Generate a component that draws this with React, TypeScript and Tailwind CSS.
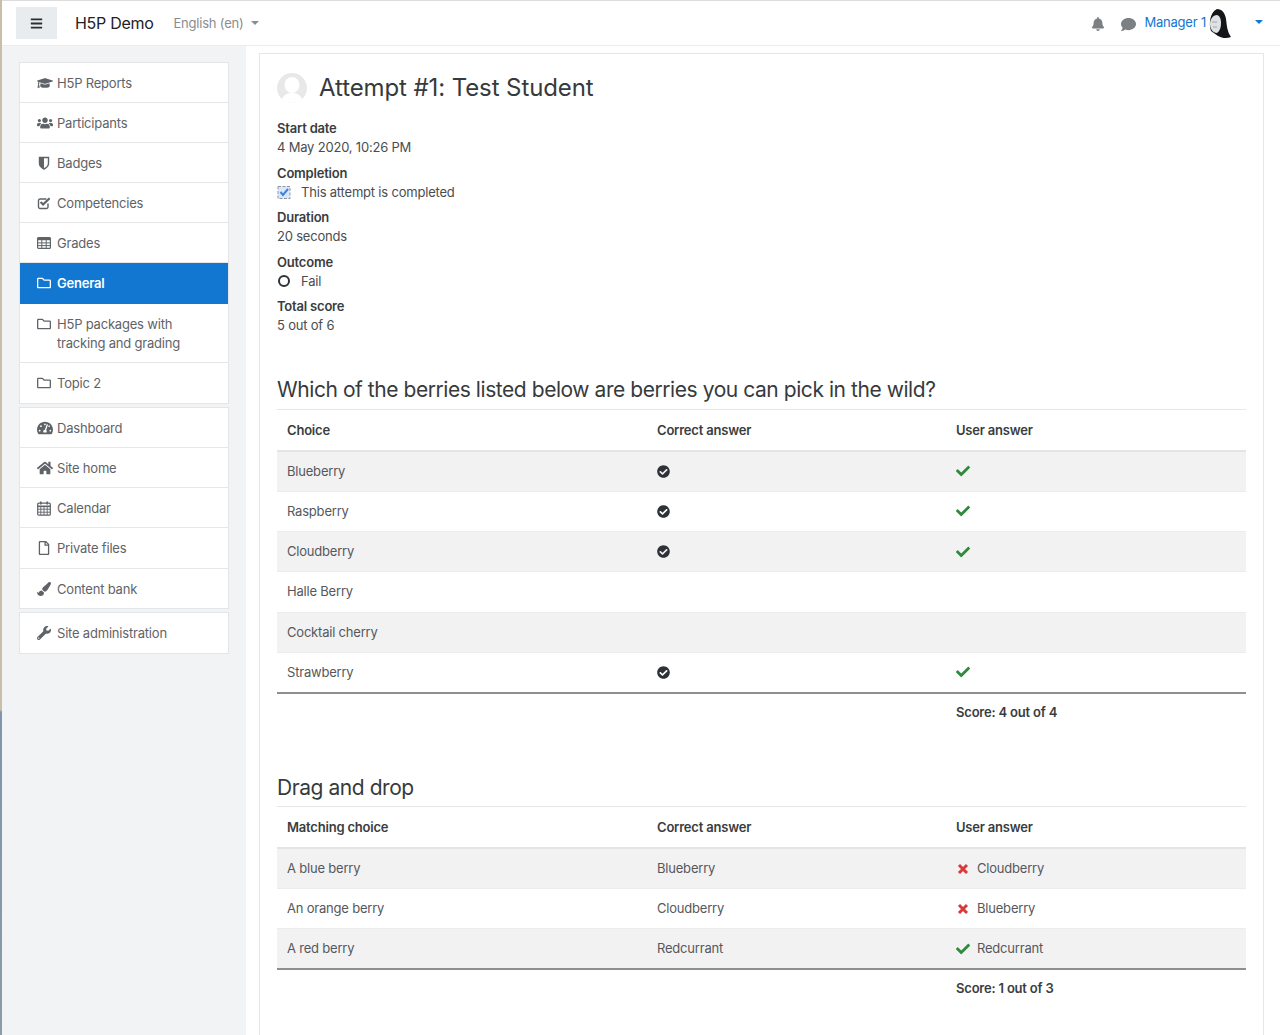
import type { ReactNode } from "react";
import {
  FaBars,
  FaBell,
  FaCheck,
  FaCheckCircle,
  FaComment,
  FaGraduationCap,
  FaHome,
  FaPaintBrush,
  FaRegFile,
  FaRegFolder,
  FaTachometerAlt,
  FaUsers,
  FaWrench,
} from "react-icons/fa";

type NavItem = { icon: ReactNode; label: ReactNode; rowClass?: string; active?: boolean };

const ic = "w-[14px] h-[14px] shrink-0";
const icWide = "w-[16px] h-[16px] shrink-0";

function ShieldIcon() {
  return (
    <svg viewBox="0 0 14 14" className="w-[14px] h-[14px] shrink-0">
      <path d="M2.5 1.5h9v6c0 3-2.500 4.500-4.500 5.500-2-1-4.500-2.500-4.500-5.500z" fill="none" stroke="currentColor" strokeWidth="1.400" />
      <path d="M2.500 1.500H7V13c-2-1-4.500-2.500-4.500-5.500z" fill="currentColor" />
    </svg>
  );
}

function CheckSquareIcon() {
  return (
    <svg viewBox="0 0 14 14" className="w-[14px] h-[14px] shrink-0">
      <path d="M11 7.500V11a1.500 1.500 0 0 1-1.500 1.500H3A1.500 1.500 0 0 1 1.500 11V4.500A1.500 1.500 0 0 1 3 3h6.500" fill="none" stroke="currentColor" strokeWidth="1.400" />
      <path d="M3.600 6l2.500 2.500 6.500-6.200" fill="none" stroke="currentColor" strokeWidth="2.200" />
    </svg>
  );
}

function GridIcon() {
  return (
    <svg viewBox="0 0 14 14" className="w-[14px] h-[14px] shrink-0">
      <rect x="0.600" y="1.600" width="12.800" height="10.800" rx="1" fill="none" stroke="currentColor" strokeWidth="1.200" />
      <rect x="0.600" y="1.600" width="12.800" height="2.600" fill="currentColor" />
      <path d="M0.600 6.900h12.800M0.600 9.600h12.800M4.800 4v8M9.200 4v8" stroke="currentColor" strokeWidth="1" />
    </svg>
  );
}

function CalendarIcon() {
  return (
    <svg viewBox="0 0 14 15" className="w-[14px] h-[15px] shrink-0">
      <rect x="0.700" y="2.200" width="12.600" height="12" rx="1" fill="none" stroke="currentColor" strokeWidth="1.200" />
      <path d="M0.700 5.300h12.600" stroke="currentColor" strokeWidth="1.600" />
      <path d="M0.700 8.200h12.600M0.700 11.200h12.600M3.800 5v9M7 5v9M10.200 5v9" stroke="currentColor" strokeWidth="0.900" />
      <path d="M3.800 0.500v3M10.200 0.500v3" stroke="currentColor" strokeWidth="1.600" />
    </svg>
  );
}

const nav1: NavItem[] = [
  { icon: <FaGraduationCap className={icWide} />, label: "H5P Reports" },
  { icon: <FaUsers className={icWide} />, label: "Participants" },
  { icon: <ShieldIcon />, label: "Badges" },
  { icon: <CheckSquareIcon />, label: "Competencies" },
  { icon: <GridIcon />, label: "Grades" },
  { icon: <FaRegFolder className={ic} />, label: "General", active: true, rowClass: "h-[41px] pt-[11px]" },
  {
    icon: <FaRegFolder className={ic} />,
    label: (
      <>
        H5P packages with
        <br />
        tracking and grading
      </>
    ),
    rowClass: "h-[59px] pt-[11px]",
  },
  { icon: <FaRegFolder className={ic} />, label: "Topic 2" },
];

const nav2: NavItem[] = [
  { icon: <FaTachometerAlt className={icWide} />, label: "Dashboard" },
  { icon: <FaHome className={icWide} />, label: "Site home" },
  { icon: <CalendarIcon />, label: "Calendar" },
  { icon: <FaRegFile className={ic} />, label: "Private files", rowClass: "h-[41px] pt-[11px]" },
  { icon: <FaPaintBrush className={ic} />, label: "Content bank", rowClass: "h-[39px] pt-[11px]" },
];

const nav3: NavItem[] = [{ icon: <FaWrench className={ic} />, label: "Site administration" }];

function NavGroup({ items }: { items: NavItem[] }) {
  return (
    <ul className="bg-white border border-[#e3e5e7]">
      {items.map((item, i) => (
        <li
          key={i}
          className={`flex items-start gap-[5px] pl-[17px] pr-2 ${item.rowClass ?? "h-[40px] pt-[11px]"} ${
            item.active ? "bg-[#1177d1] text-white font-semibold" : "text-[#5f6368]"
          } ${i < items.length - 1 && !item.active ? "border-b border-[#e5e7e9]" : ""}`}
        >
          <span className="w-[15px] h-[18px] flex items-center justify-start shrink-0">{item.icon}</span>
          <span className="leading-[19px]">{item.label}</span>
        </li>
      ))}
    </ul>
  );
}

function Field({ label, children }: { label: string; children: ReactNode }) {
  return (
    <div className="h-[44.5px]">
      <div className="font-semibold leading-[19px] text-[#3a3d40]">{label}</div>
      <div className="leading-[19px] flex items-center text-[#4a4d50]">{children}</div>
    </div>
  );
}

function Good() {
  return <FaCheck className="w-[14px] h-[14px] text-[#2f8a3c]" />;
}

function Bad() {
  return (
    <svg viewBox="0 0 14 14" className="w-[14px] h-[14px] text-[#d83a3a]">
      <path d="M3 3l8 8M11 3l-8 8" fill="none" stroke="currentColor" strokeWidth="3" />
    </svg>
  );
}

function Correct() {
  return <FaCheckCircle className="w-[13px] h-[13px] text-[#2e3236]" />;
}

type Row = { a: string; b: ReactNode; c: ReactNode };

function AnswerTable({ head, rows, score }: { head: string[]; rows: Row[]; score: string }) {
  return (
    <table className="w-full table-fixed border-collapse">
      <colgroup>
        <col className="w-[370px]" />
        <col className="w-[299px]" />
        <col />
      </colgroup>
      <thead>
        <tr className="h-[42px] border-t border-[#e6e7e8] border-b-2 border-b-[#e3e4e6] text-left text-[#3a3d40]">
          {head.map((h) => (
            <th key={h} className="px-[10px] pt-[2px] font-semibold">
              {h}
            </th>
          ))}
        </tr>
      </thead>
      <tbody className="text-[#55585c] border-b-2 border-b-[#8d8f91]">
        {rows.map((r, i) => (
          <tr key={r.a} className={`h-[40.3px] border-b border-[#ebecec] ${i % 2 === 0 ? "bg-[#f2f2f3]" : ""}`}>
            <td className="px-[10px]">{r.a}</td>
            <td className="px-[10px]">{r.b}</td>
            <td className="px-[10px]">{r.c}</td>
          </tr>
        ))}
      </tbody>
      <tfoot>
        <tr className="h-[39px]">
          <td />
          <td />
          <td className="px-[10px] font-semibold text-[#3a3d40]">{score}</td>
        </tr>
      </tfoot>
    </table>
  );
}

function UserAnswer({ good, text }: { good: boolean; text: string }) {
  return (
    <span className="flex items-center gap-[7px]">
      <span className="w-[14px] flex justify-center">{good ? <Good /> : <Bad />}</span>
      {text}
    </span>
  );
}

export default function App() {
  return (
    <div className="relative w-[1280px] h-[1035px] overflow-hidden bg-white text-[13px] tracking-[-0.2px] font-['Inter','Noto_Sans',sans-serif] flex flex-col">
      {/* Top bar */}
      <header className="h-[46px] shrink-0 flex items-center pl-[16px] pr-[17px] border-t border-t-[#dcdcdc] border-b border-b-[#ececec] bg-white">
        <button className="w-[41px] h-[32px] bg-[#e9ecef] flex items-center justify-center text-[#2b2f33]">
          <FaBars className="w-[13px] h-[13px]" />
        </button>
        <span className="ml-[18px] text-[16px] tracking-[-0.3px] text-[#1d2125]">H5P Demo</span>
        <span className="ml-[20px] mt-[2px] text-[#8a8d90]">English (en)</span>
        <span className="ml-[7px] w-0 h-0 border-x-[4px] border-x-transparent border-t-[4px] border-t-[#8a8d90]" />
        <div className="ml-auto flex items-center">
          <FaBell className="w-[14px] h-[14px] mt-[2px] text-[#7d8083]" />
          <FaComment className="ml-[16px] w-[15px] h-[15px] mt-[2px] text-[#7d8083]" />
          <span className="ml-[8px] text-[#1177d1]">Manager 1</span>
          <svg viewBox="0 0 24 30" className="ml-[2px] w-[24px] h-[30px] mt-[1px]">
            <path d="M9 0c5 0 8 4 9 10 1 7 1 12 5 18-5 2-9 1-13-1L3 22C1 16 1 4 9 0z" fill="#15161a" />
            <path d="M9 6C5 6 2 10 2 15c0 5 3 9 7 9 3-2 4-6 4-10 0-4-1-7-4-8z" fill="#dfe2e4" />
            <path d="M4 13h5M5 18h4" stroke="#a5a8aa" strokeWidth="1" />
          </svg>
          <span className="ml-[23px] mb-[3px] w-0 h-0 border-x-[4px] border-x-transparent border-t-[4px] border-t-[#1177d1]" />
        </div>
      </header>

      <div className="flex flex-1 min-h-0">
        {/* Sidebar */}
        <aside className="w-[246px] shrink-0 bg-[#f2f3f4] pl-[19px] pr-[17px] pt-[16px] flex flex-col gap-[3px]">
          <NavGroup items={nav1} />
          <NavGroup items={nav2} />
          <NavGroup items={nav3} />
        </aside>

        {/* Main */}
        <main className="flex-1 pl-[13px] pr-[16px] pt-[7px] min-w-0">
          <section className="h-[1100px] border border-[#e6e7e8] pl-[17px] pr-[17px] pt-[19px]">
            <div className="flex items-center h-[30px] gap-[12px]">
              <svg viewBox="0 0 30 30" className="w-[30px] h-[30px]">
                <defs>
                  <clipPath id="avatar">
                    <circle cx="15" cy="15" r="15" />
                  </clipPath>
                </defs>
                <g clipPath="url(#avatar)">
                  <rect width="30" height="30" fill="#e8e8e8" />
                  <ellipse cx="15" cy="12" rx="7.500" ry="8" fill="#fff" />
                  <path d="M4 30c1-8 6-10 11-10s10 2 11 10z" fill="#fff" />
                </g>
              </svg>
              <h1 className="text-[24px] tracking-[-0.1px] text-[#373a3c] leading-[30px]">Attempt #1: Test Student</h1>
            </div>

            <div className="mt-[16px]">
              <Field label="Start date">4 May 2020, 10:26 PM</Field>
              <Field label="Completion">
                <svg viewBox="0 0 14 14" className="w-[14px] h-[14px] mr-[10px]">
                  <rect x="1" y="1.500" width="12" height="12" fill="#dbe8fb" stroke="#8c93a6" strokeWidth="1" strokeDasharray="3 1.500" />
                  <path d="M3.500 7l2.500 3 5-6" fill="none" stroke="#3d82e6" strokeWidth="2" />
                </svg>
                This attempt is completed
              </Field>
              <Field label="Duration">20 seconds</Field>
              <Field label="Outcome">
                <span className="w-[12px] h-[12px] ml-[1px] mr-[11px] rounded-full border-2 border-[#2e3236]" />
                Fail
              </Field>
              <Field label="Total score">5 out of 6</Field>
            </div>

            <h2 className="mt-[35px] text-[21px] tracking-[-0.44px] leading-[26px] text-[#373a3c] pb-[6px]">
              Which of the berries listed below are berries you can pick in the wild?
            </h2>
            <AnswerTable
              head={["Choice", "Correct answer", "User answer"]}
              rows={[
                { a: "Blueberry", b: <Correct />, c: <Good /> },
                { a: "Raspberry", b: <Correct />, c: <Good /> },
                { a: "Cloudberry", b: <Correct />, c: <Good /> },
                { a: "Halle Berry", b: null, c: null },
                { a: "Cocktail cherry", b: null, c: null },
                { a: "Strawberry", b: <Correct />, c: <Good /> },
              ]}
              score="Score: 4 out of 4"
            />

            <h2 className="mt-[43px] text-[21px] tracking-[-0.44px] leading-[26px] text-[#373a3c] pb-[5px]">Drag and drop</h2>
            <AnswerTable
              head={["Matching choice", "Correct answer", "User answer"]}
              rows={[
                { a: "A blue berry", b: "Blueberry", c: <UserAnswer good={false} text="Cloudberry" /> },
                { a: "An orange berry", b: "Cloudberry", c: <UserAnswer good={false} text="Blueberry" /> },
                { a: "A red berry", b: "Redcurrant", c: <UserAnswer good text="Redcurrant" /> },
              ]}
              score="Score: 1 out of 3"
            />
          </section>
        </main>
      </div>

      {/* desktop peeking in at the window edge */}
      <div className="absolute left-0 top-0 w-[2px] h-full bg-[linear-gradient(to_bottom,#c9bfa8_0,#c9bfa8_710px,#7f95ad_712px,#8a9ca6_100%)]" />
    </div>
  );
}
